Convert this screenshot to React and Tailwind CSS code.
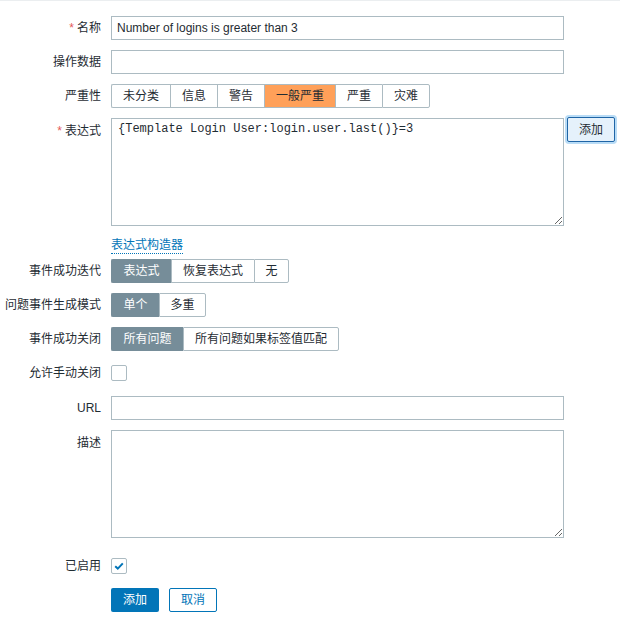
const font = { fontFamily: '"Liberation Sans", Arial, "Noto Sans CJK SC", sans-serif' };

const Row = ({ label, required, children, className = "", top = false }) => (
  <div className={`flex ${className}`}>
    <div
      className={`w-[101px] shrink-0 flex justify-end h-[24px] ${
        top ? "items-start pt-[4px]" : "items-center"
      } text-[12px] text-[#1f2c33] whitespace-nowrap`}
    >
      {required && <span className="text-[#e45959] mr-[3px] text-[12px]">*</span>}
      {label}
    </div>
    <div className="ml-[10px] flex-1">{children}</div>
  </div>
);

const Segmented = ({ items, active }) => (
  <div className="flex h-[24px]">
    {items.map(([text, w], i) => {
      const on = i === active;
      return (
        <div
          key={text}
          style={{ width: w }}
          className={`flex items-center justify-center text-[12px] border-y border-l ${
            i === items.length - 1 ? "border-r rounded-r-[2px]" : ""
          } ${i === 0 ? "rounded-l-[2px]" : ""} ${
            on
              ? "bg-[#768d99] text-white border-[#768d99]"
              : "bg-white text-[#1f2c33] border-[#acbbc2]"
          }`}
        >
          {text}
        </div>
      );
    })}
  </div>
);

const Checkbox = ({ checked }) => (
  <div className="h-[24px] flex items-center">
    <div className="w-[16px] h-[16px] border border-[#acbbc2] rounded-[2px] bg-white flex items-center justify-center">
      {checked && (
        <svg width="12" height="12" viewBox="0 0 12 12">
          <path d="M2.2 6.2 L4.8 8.6 L9.8 3.4" fill="none" stroke="#0275b8" strokeWidth="2" />
        </svg>
      )}
    </div>
  </div>
);

export default function App() {
  const severities = [
    ["未分类", 59],
    ["信息", 47],
    ["警告", 47],
    ["一般严重", 71],
    ["严重", 47],
    ["灾难", 48],
  ];

  return (
    <div className="min-h-screen bg-white border-t border-[#ebeef0]" style={font}>
      <div className="pt-[15px]">
        <Row label="名称" required>
          <input
            defaultValue="Number of logins is greater than 3"
            className="block w-[453px] h-[24px] border border-[#acbbc2] px-[5px] text-[12px] text-[#1f2c33] outline-none"
            style={font}
          />
        </Row>

        <Row label="操作数据" className="mt-[10px]">
          <input className="block w-[453px] h-[24px] border border-[#acbbc2] px-[5px] text-[12px] outline-none" />
        </Row>

        <Row label="严重性" className="mt-[10px]">
          <div className="flex h-[24px]">
            {severities.map(([text, w], i) => (
              <div
                key={text}
                style={{ width: w }}
                className={`flex items-center justify-center text-[12px] border-y border-l ${
                  i === severities.length - 1 ? "border-r rounded-r-[2px]" : ""
                } ${i === 0 ? "rounded-l-[2px]" : ""} ${
                  i === 3
                    ? "bg-[#ffa059] border-[#acbbc2] text-[#1f2c33]"
                    : "bg-white border-[#acbbc2] text-[#1f2c33]"
                }`}
              >
                {text}
              </div>
            ))}
          </div>
        </Row>

        <Row label="表达式" required top className="mt-[10px]">
          <div className="flex items-start">
            <textarea
              defaultValue="{Template Login User:login.user.last()}=3"
              className="w-[453px] h-[108px] border border-[#acbbc2] px-[6px] pt-[3px] text-[12px] leading-[14px] text-[#1f2c33] outline-none block"
              style={{ fontFamily: '"Liberation Mono", "Courier New", monospace' }}
            />
            <button className="ml-[3px] -mt-[1px] w-[48px] h-[25px] border border-[#1f65a6] rounded-[2px] bg-[#e5f1fb] text-[12px] text-[#1f2c33] shadow-[0_0_0_2px_#b9dcf6]">
              添加
            </button>
          </div>
          <div className="mt-[6px] h-[17px]">
            <span className="text-[12px] text-[#0275b8] border-b border-dotted border-[#0275b8] pb-[1px]">
              表达式构造器
            </span>
          </div>
        </Row>

        <Row label="事件成功迭代" className="mt-[10px]">
          <Segmented
            items={[
              ["表达式", 60],
              ["恢复表达式", 83],
              ["无", 35],
            ]}
            active={0}
          />
        </Row>

        <Row label="问题事件生成模式" className="mt-[10px]">
          <Segmented
            items={[
              ["单个", 48],
              ["多重", 47],
            ]}
            active={0}
          />
        </Row>

        <Row label="事件成功关闭" className="mt-[10px]">
          <Segmented
            items={[
              ["所有问题", 72],
              ["所有问题如果标签值匹配", 156],
            ]}
            active={0}
          />
        </Row>

        <Row label="允许手动关闭" className="mt-[10px]">
          <Checkbox />
        </Row>

        <Row label="URL" className="mt-[11px]">
          <input className="block w-[453px] h-[24px] border border-[#acbbc2] px-[5px] text-[12px] outline-none" />
        </Row>

        <Row label="描述" top className="mt-[10px]">
          <textarea className="w-[453px] h-[108px] border border-[#acbbc2] px-[5px] text-[12px] outline-none block" />
        </Row>

        <Row label="已启用" className="mt-[16px]">
          <Checkbox checked />
        </Row>

        <Row label="" className="mt-[10px]">
          <div className="flex gap-[10px]">
            <button className="w-[48px] h-[24px] bg-[#0275b8] text-white text-[12px] rounded-[2px]">
              添加
            </button>
            <button className="w-[48px] h-[24px] bg-white border border-[#0275b8] text-[#0275b8] text-[12px] rounded-[2px]">
              取消
            </button>
          </div>
        </Row>
      </div>
    </div>
  );
}
